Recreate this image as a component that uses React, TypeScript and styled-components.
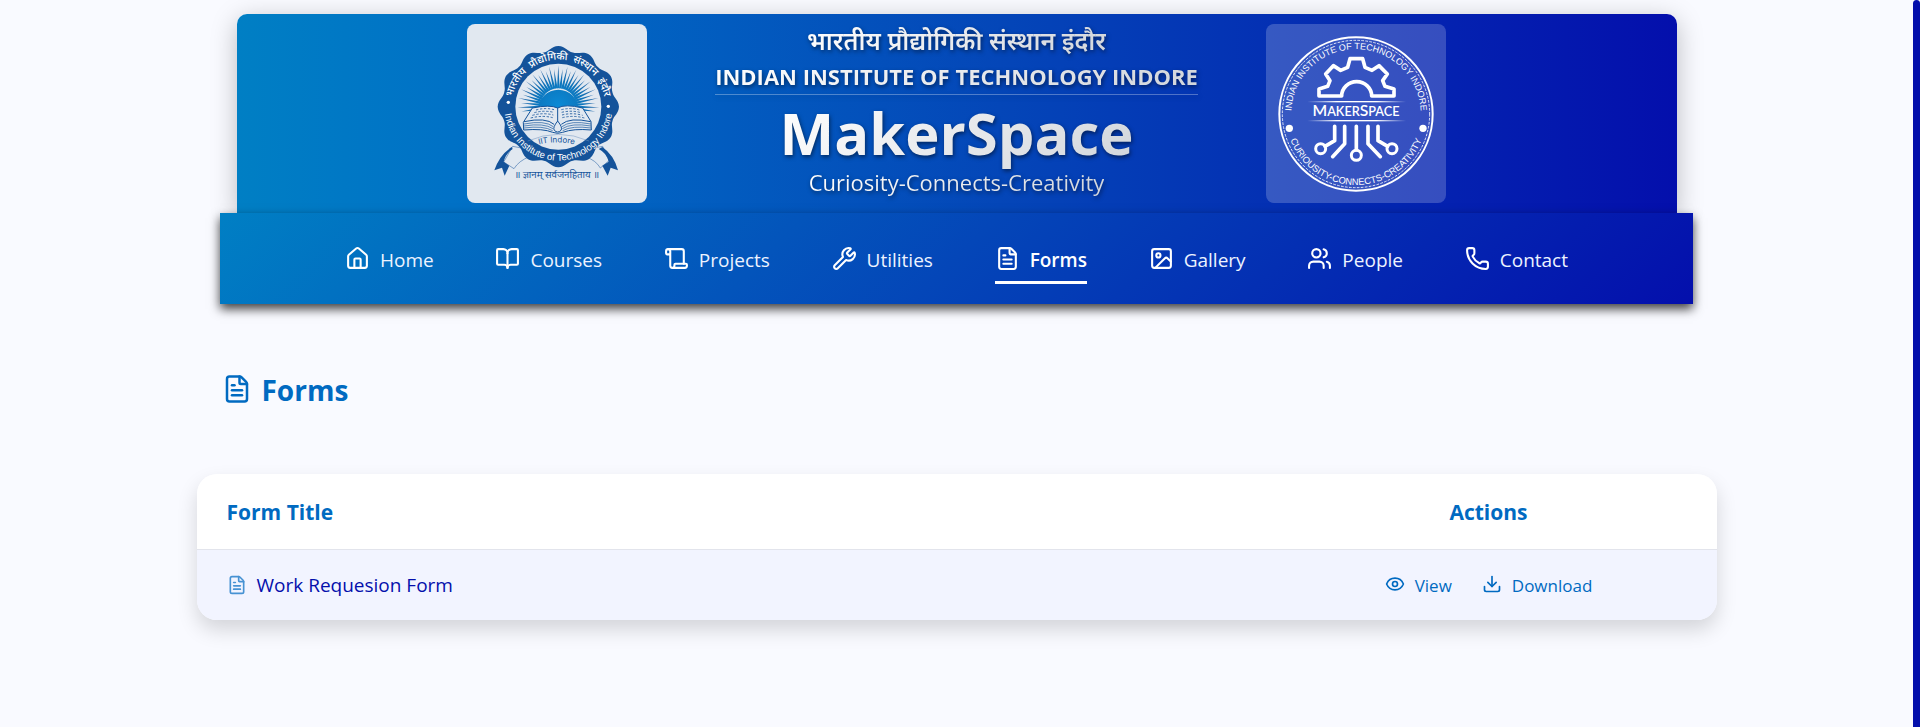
import React from "react";
import styled, { createGlobalStyle, css } from "styled-components";
import {
  House,
  BookOpen,
  Scroll,
  Wrench,
  FileText,
  Image as ImageIcon,
  Users,
  Phone,
  Eye,
  Download,
} from "lucide-react";

const blue = "#006ac1";
const navy = "#040fac";
const sans = '"Open Sans", "Noto Sans", "Liberation Sans", sans-serif';

const GlobalStyle = createGlobalStyle`
  *, *::before, *::after { box-sizing: border-box; }
  body {
    margin: 0;
    background: #f9faff;
    font-family: ${sans};
    color: ${navy};
  }
`;

const Shell = styled.div`
  display: flex;
  min-height: 100vh;
`;

const Page = styled.div`
  flex: 1;
  min-width: 0;
  display: flex;
  flex-direction: column;
  align-items: center;
  padding: 14px 0 40px;
`;

const ScrollTrack = styled.div`
  width: 7px;
  background: ${navy};
  border-radius: 4px 4px 0 0;
`;

const Banner = styled.header`
  width: 100%;
  max-width: 1440px;
  display: flex;
  justify-content: center;
  padding: 10px 16px;
  border-radius: 10px 10px 0 0;
  background: linear-gradient(90deg, #007fc4 0%, #0071c6 15%, #0446b8 53%, #040fac 100%);
  box-shadow: 0 6px 26px rgba(0, 0, 0, 0.25);
`;

const BannerInner = styled.div`
  width: 100%;
  max-width: 980px;
  display: flex;
  justify-content: space-between;
  align-items: center;
`;

const LogoBox = styled.div<{ $tint: string }>`
  flex: none;
  width: 180px;
  height: 179px;
  border-radius: 8px;
  background: ${(p) => p.$tint};

  svg {
    display: block;
    width: 100%;
    height: 100%;
  }
`;

const Titles = styled.div`
  display: flex;
  flex-direction: column;
  align-items: center;
  padding-bottom: 4px;
  text-align: center;
  white-space: nowrap;
  filter: drop-shadow(1px 2px 2px rgba(0, 0, 0, 0.5));
`;

const silver = css`
  margin: 0;
  color: transparent;
  background: linear-gradient(135deg, #ffffff 0%, #d1d5db 100%);
  background-clip: text;
  -webkit-background-clip: text;
`;

const HindiName = styled.p`
  ${silver}
  margin-bottom: 3px;
  font-size: 25px;
  font-weight: 600;
  line-height: 32px;
`;

const InstituteRule = styled.div`
  border-bottom: 1px solid rgba(255, 255, 255, 0.3);
  padding-bottom: 1px;
`;

const InstituteName = styled.p`
  ${silver}
  font-size: 22px;
  font-weight: 700;
  line-height: 34px;
`;

const SiteName = styled.h1`
  ${silver}
  font-size: 58px;
  font-weight: 700;
  line-height: 75px;
`;

const Motto = styled.p`
  ${silver}
  padding-bottom: 5px;
  font-size: 22px;
  font-weight: 400;
  line-height: 24px;
`;

const Nav = styled.nav`
  position: relative;
  width: 77%;
  padding: 20px 125px;
  background: linear-gradient(135deg, #007fc4 0%, #0446b8 50%, #040fac 100%);
  box-shadow: 0 5px 10px rgba(0, 0, 0, 0.75);
`;

const NavList = styled.ul`
  display: flex;
  justify-content: space-between;
  list-style: none;
  margin: 0;
  padding: 0;
`;

const NavLink = styled.a<{ $active?: boolean }>`
  display: flex;
  align-items: center;
  gap: 10px;
  height: 51px;
  padding-top: 6px;
  border-bottom: 3px solid ${(p) => (p.$active ? "#ffffff" : "transparent")};
  color: ${(p) => (p.$active ? "#ffffff" : "#edf3ff")};
  font-size: 19px;
  font-weight: ${(p) => (p.$active ? 600 : 500)};
  text-decoration: none;
  white-space: nowrap;

  svg {
    width: 25px;
    height: 25px;
    margin-bottom: 3px;
    color: #ffffff;
  }
`;

const Main = styled.main`
  width: 100%;
  max-width: 1520px;
  padding-top: 66px;
`;

const Heading = styled.h2`
  display: flex;
  align-items: center;
  gap: 10px;
  margin: 0 0 64px;
  padding-left: 25px;
  font-size: 28px;
  line-height: 40px;
  font-weight: 700;
  color: ${blue};

  svg {
    width: 30px;
    height: 30px;
    margin-bottom: 3px;
  }
`;

const Table = styled.table`
  width: 100%;
  table-layout: fixed;
  border-collapse: separate;
  border-spacing: 0;
  border-radius: 20px;
  overflow: hidden;
  box-shadow: 0 10px 20px rgba(0, 0, 0, 0.15);
`;

const HeadCell = styled.th<{ $narrow?: boolean }>`
  width: ${(p) => (p.$narrow ? "30%" : "70%")};
  height: 76px;
  padding: 0 30px;
  text-align: ${(p) => (p.$narrow ? "center" : "left")};
  background: #ffffff;
  border-bottom: 1px solid #e2e4ec;
  color: ${blue};
  font-size: 21px;
  font-weight: 700;
`;

const Cell = styled.td`
  height: 70px;
  padding: 0 30px;
  background: #f2f4ff;
  font-size: 19px;
`;

const FormName = styled.div`
  display: flex;
  align-items: center;
  gap: 10px;

  svg {
    width: 20px;
    height: 20px;
    color: ${blue};
    opacity: 0.7;
  }
`;

const Actions = styled.div`
  display: flex;
  justify-content: center;
  gap: 30px;
`;

const ActionLink = styled.a`
  display: flex;
  align-items: center;
  gap: 10px;
  color: ${blue};
  font-size: 17px;
  font-weight: 500;
  text-decoration: none;

  svg {
    width: 20px;
    height: 20px;
    margin-bottom: 2px;
  }
`;

const rad = (deg: number) => (deg * Math.PI) / 180;

/* Twelve-lobed outline of the institute seal. */
function scallop(cx: number, cy: number, peak: number, valley: number) {
  let d = "";
  for (let i = 0; i < 12; i++) {
    const at = (deg: number, r: number) =>
      `${(cx + r * Math.sin(rad(deg))).toFixed(1)} ${(cy - r * Math.cos(rad(deg))).toFixed(1)}`;
    const a = i * 30;
    if (i === 0) d += `M${at(-15, valley)}`;
    d += `C${at(a - 9, valley)} ${at(a - 7, peak)} ${at(a, peak)}`;
    d += `C${at(a + 7, peak)} ${at(a + 9, valley)} ${at(a + 15, valley)}`;
  }
  return d + "Z";
}

function InstituteSeal() {
  const rays = Array.from({ length: 31 }, (_, i) => -98 + i * (196 / 30));
  return (
    <svg viewBox="21 27 540 537" role="img" aria-label="IIT Indore seal">
      <defs>
        <radialGradient id="sun" gradientUnits="userSpaceOnUse" cx="295" cy="272" r="126">
          <stop offset="0" stopColor="#0a8ad6" />
          <stop offset="0.55" stopColor="#0d76bd" />
          <stop offset="1" stopColor="#2d5f9c" />
        </radialGradient>
        <path id="sealTop" d="M154 275A141 141 0 0 1 436 275" />
        <path id="sealBottom" d="M133 275A162 162 0 0 0 457 275" />
        <path id="sealName" d="M210 396Q290 368 370 396" />
      </defs>
      <g fill="#e1e8f0" stroke="#14539a" strokeWidth="1.5">
        <path d="M158 394L131 441L162 461Q176 438 208 425L190 400Z" />
        <path d="M428 394L447 437L421 459Q408 436 376 425L396 400Z" />
      </g>
      <g fill="#14539a">
        <path d="M155 396Q118 420 103 466L126 458L134 482L148 452L131 440Q138 414 158 402Z" />
        <path d="M427 396Q462 420 474 466L452 458L443 482L427 452L446 440Q440 414 416 402Z" />
        <path d={scallop(295, 275, 182, 168)} />
      </g>
      <circle cx="295" cy="275" r="129" fill="#e1e8f0" />
      <g fill="url(#sun)">
        <path d="M235 284A60 60 0 1 1 355 284Z" />
        {rays.map((deg, i) => (
          <path
            key={i}
            transform={`rotate(${deg} 295 274)`}
            d={i % 2 ? "M291 220L295 151L299 220Z" : "M291 220L295 162L299 220Z"}
          />
        ))}
      </g>
      <g stroke="#14539a" strokeWidth="3" strokeLinejoin="round" fill="#e1e8f0">
        <path d="M217 279L190 322L191 345Q250 340 278 352Q293 358 308 352Q340 340 394 345L393 320L368 279Q315 266 293 279Q270 268 217 279Z" />
        <path d="M192 320Q258 306 282 328M392 320Q330 306 304 328M293 279V318" fill="none" />
        <path
          d="M192 327Q255 315 280 335M192 333Q252 323 279 341M192 339Q250 331 278 347M393 327Q330 315 306 335M393 333Q334 323 307 341M393 339Q336 331 308 347"
          fill="none"
          strokeWidth="2"
        />
        <path d="M293 318Q277 338 283 346Q293 356 303 346Q309 338 293 318Z" />
        <path
          d="M228 285Q256 277 282 284M223 293Q252 285 281 292M217 301Q250 292 280 300M212 309Q248 300 278 308M304 284Q332 277 358 285M305 292Q334 285 363 293M306 300Q336 292 368 301M307 308Q340 300 373 309"
          fill="none"
          strokeWidth="2.5"
          strokeDasharray="7 5"
        />
      </g>
      <path d="M203 378Q295 338 387 378" fill="none" stroke="#6f93bf" strokeWidth="1.5" />
      <text fill="#14539a" fontFamily="Inter, sans-serif" fontSize="24" textAnchor="middle">
        <textPath href="#sealName" startOffset="50%">IIT Indore</textPath>
      </text>
      <text fill="#ffffff" fontFamily={sans} fontSize="31" fontWeight="500" textAnchor="middle">
        <textPath href="#sealTop" startOffset="50%">
          {"भारतीय\u00a0\u00a0प्रौद्योगिकी\u00a0\u00a0संस्थान\u00a0\u00a0इंदौर"}
        </textPath>
      </text>
      <text fill="#ffffff" fontFamily='"Liberation Sans", sans-serif' fontSize="29" textAnchor="middle">
        <textPath href="#sealBottom" startOffset="50%">Indian Institute of Technology Indore</textPath>
      </text>
      <circle cx="145" cy="262" r="5" fill="#ffffff" />
      <circle cx="445" cy="274" r="5" fill="#ffffff" />
      <text x="290" y="490" fill="#14539a" fontFamily={sans} fontSize="29" textAnchor="middle">
        ॥ ज्ञानम् सर्वजनहिताय ॥
      </text>
    </svg>
  );
}

function MakerSpaceSeal() {
  return (
    <svg viewBox="21 27 540 537" role="img" aria-label="MakerSpace seal">
      <defs>
        <path id="makerTop" d="M104 348A194 194 0 1 1 478 348" />
        <path id="makerBottom" d="M84 340A211 211 0 0 0 498 340" />
        <linearGradient id="fade" x1="0" x2="1" y1="0" y2="0">
          <stop offset="0" stopColor="#ffffff" stopOpacity="0" />
          <stop offset="0.3" stopColor="#ffffff" />
          <stop offset="0.7" stopColor="#ffffff" />
          <stop offset="1" stopColor="#ffffff" stopOpacity="0" />
        </linearGradient>
      </defs>
      <g fill="none" stroke="#ffffff">
        <circle cx="291" cy="297" r="230" strokeWidth="6" />
        <circle cx="291" cy="297" r="221" strokeWidth="2.5" strokeDasharray="8 4" />
        <g strokeWidth="11" strokeLinejoin="round" strokeLinecap="round">
          <path d="M180 243V222L206 214L213 197L200 177L223 152L245 166L266 157L273 131H311L318 157L339 166L360 152L385 177L371 197L378 214L405 222V243H338A45 43 0 0 0 248 243Z" />
          <path d="M227 334V377L198 394M257 334V386L221 425M292 334V404M327 334V386L364 425M357 334V377L386 394" />
        </g>
        <g strokeWidth="9">
          <circle cx="185" cy="401" r="15" />
          <circle cx="292" cy="421" r="15" />
          <circle cx="399" cy="401" r="15" />
        </g>
      </g>
      <g fill="#ffffff">
        <circle cx="91" cy="340" r="11" />
        <circle cx="492" cy="340" r="11" />
        <rect x="145" y="258" width="296" height="4" fill="url(#fade)" />
        <rect x="145" y="315" width="296" height="4" fill="url(#fade)" />
        <text x="291" y="303" fontFamily="Lato, sans-serif" fontWeight="600" fontSize="47" textAnchor="middle">
          M<tspan fontSize="38">AKER</tspan>S<tspan fontSize="38">PACE</tspan>
        </text>
        <text fontFamily='"Liberation Sans", sans-serif' fontSize="27" textAnchor="middle">
          <textPath href="#makerTop" startOffset="50%">INDIAN INSTITUTE OF TECHNOLOGY INDORE</textPath>
        </text>
        <text fontFamily='"Liberation Sans", sans-serif' fontSize="28" textAnchor="middle">
          <textPath href="#makerBottom" startOffset="50%">CURIOUSITY-CONNECTS-CREATIVITY</textPath>
        </text>
      </g>
    </svg>
  );
}

const links = [
  { label: "Home", Icon: House },
  { label: "Courses", Icon: BookOpen },
  { label: "Projects", Icon: Scroll },
  { label: "Utilities", Icon: Wrench },
  { label: "Forms", Icon: FileText, active: true },
  { label: "Gallery", Icon: ImageIcon },
  { label: "People", Icon: Users },
  { label: "Contact", Icon: Phone },
];

const forms = ["Work Requesion Form"];

export default function App() {
  return (
    <Shell>
      <GlobalStyle />
      <Page>
        <Banner>
          <BannerInner>
            <LogoBox $tint="#e1e8f0">
              <InstituteSeal />
            </LogoBox>
            <Titles>
              <HindiName lang="hi">भारतीय प्रौद्योगिकी संस्थान इंदौर</HindiName>
              <InstituteRule>
                <InstituteName>INDIAN INSTITUTE OF TECHNOLOGY INDORE</InstituteName>
              </InstituteRule>
              <SiteName>MakerSpace</SiteName>
              <Motto>Curiosity-Connects-Creativity</Motto>
            </Titles>
            <LogoBox $tint="rgba(255, 255, 255, 0.2)">
              <MakerSpaceSeal />
            </LogoBox>
          </BannerInner>
        </Banner>
        <Nav>
          <NavList>
            {links.map(({ label, Icon, active }) => (
              <li key={label}>
                <NavLink href="#" $active={active} aria-current={active ? "page" : undefined}>
                  <Icon />
                  {label}
                </NavLink>
              </li>
            ))}
          </NavList>
        </Nav>
        <Main>
          <Heading>
            <FileText />
            Forms
          </Heading>
          <Table>
            <thead>
              <tr>
                <HeadCell scope="col">Form Title</HeadCell>
                <HeadCell scope="col" $narrow>
                  Actions
                </HeadCell>
              </tr>
            </thead>
            <tbody>
              {forms.map((name) => (
                <tr key={name}>
                  <Cell>
                    <FormName>
                      <FileText />
                      {name}
                    </FormName>
                  </Cell>
                  <Cell>
                    <Actions>
                      <ActionLink href="#">
                        <Eye />
                        View
                      </ActionLink>
                      <ActionLink href="#">
                        <Download />
                        Download
                      </ActionLink>
                    </Actions>
                  </Cell>
                </tr>
              ))}
            </tbody>
          </Table>
        </Main>
      </Page>
      <ScrollTrack />
    </Shell>
  );
}
